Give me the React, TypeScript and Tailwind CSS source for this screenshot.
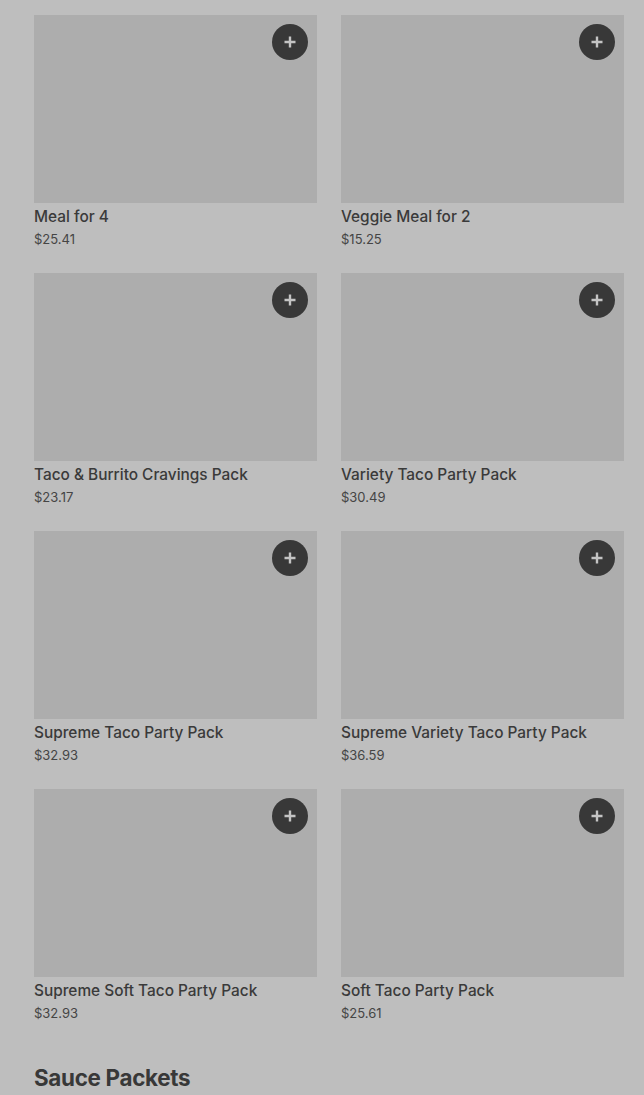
import React from "react";

const items = [
  { name: "Meal for 4", price: "$25.41" },
  { name: "Veggie Meal for 2", price: "$15.25" },
  { name: "Taco & Burrito Cravings Pack", price: "$23.17" },
  { name: "Variety Taco Party Pack", price: "$30.49" },
  { name: "Supreme Taco Party Pack", price: "$32.93" },
  { name: "Supreme Variety Taco Party Pack", price: "$36.59" },
  { name: "Supreme Soft Taco Party Pack", price: "$32.93" },
  { name: "Soft Taco Party Pack", price: "$25.61" },
];

export default function App() {
  return (
    <div
      className="w-[644px] h-[1095px] overflow-hidden bg-[#bebebe] pl-[34px] pr-[20px] pt-[15px]"
      style={{ fontFamily: "Inter, 'Noto Sans', sans-serif" }}
    >
      <div className="grid grid-cols-2 gap-x-6 gap-y-[24px]">
        {items.map((it) => (
          <div key={it.name} className="flex flex-col">
            <div className="relative h-[188px] bg-[#adadad]">
              <button className="absolute right-[9px] top-[9px] flex h-9 w-9 items-center justify-center rounded-full bg-[#383838]">
                <svg width="14" height="14" viewBox="0 0 14 14">
                  <path d="M7 1.5v11M1.5 7h11" stroke="#c4c4c4" strokeWidth="2.4" />
                </svg>
              </button>
            </div>
            <div className="mt-[4px] text-[15.4px] leading-5 font-medium text-[#3a3a3a]">{it.name}</div>
            <div className="mt-[2px] text-[13px] leading-5 text-[#454545]">{it.price}</div>
          </div>
        ))}
      </div>
      <h2 className="mt-[39px] text-[22.4px] leading-8 font-bold tracking-[-0.3px] text-[#383838]">Sauce Packets</h2>
    </div>
  );
}
